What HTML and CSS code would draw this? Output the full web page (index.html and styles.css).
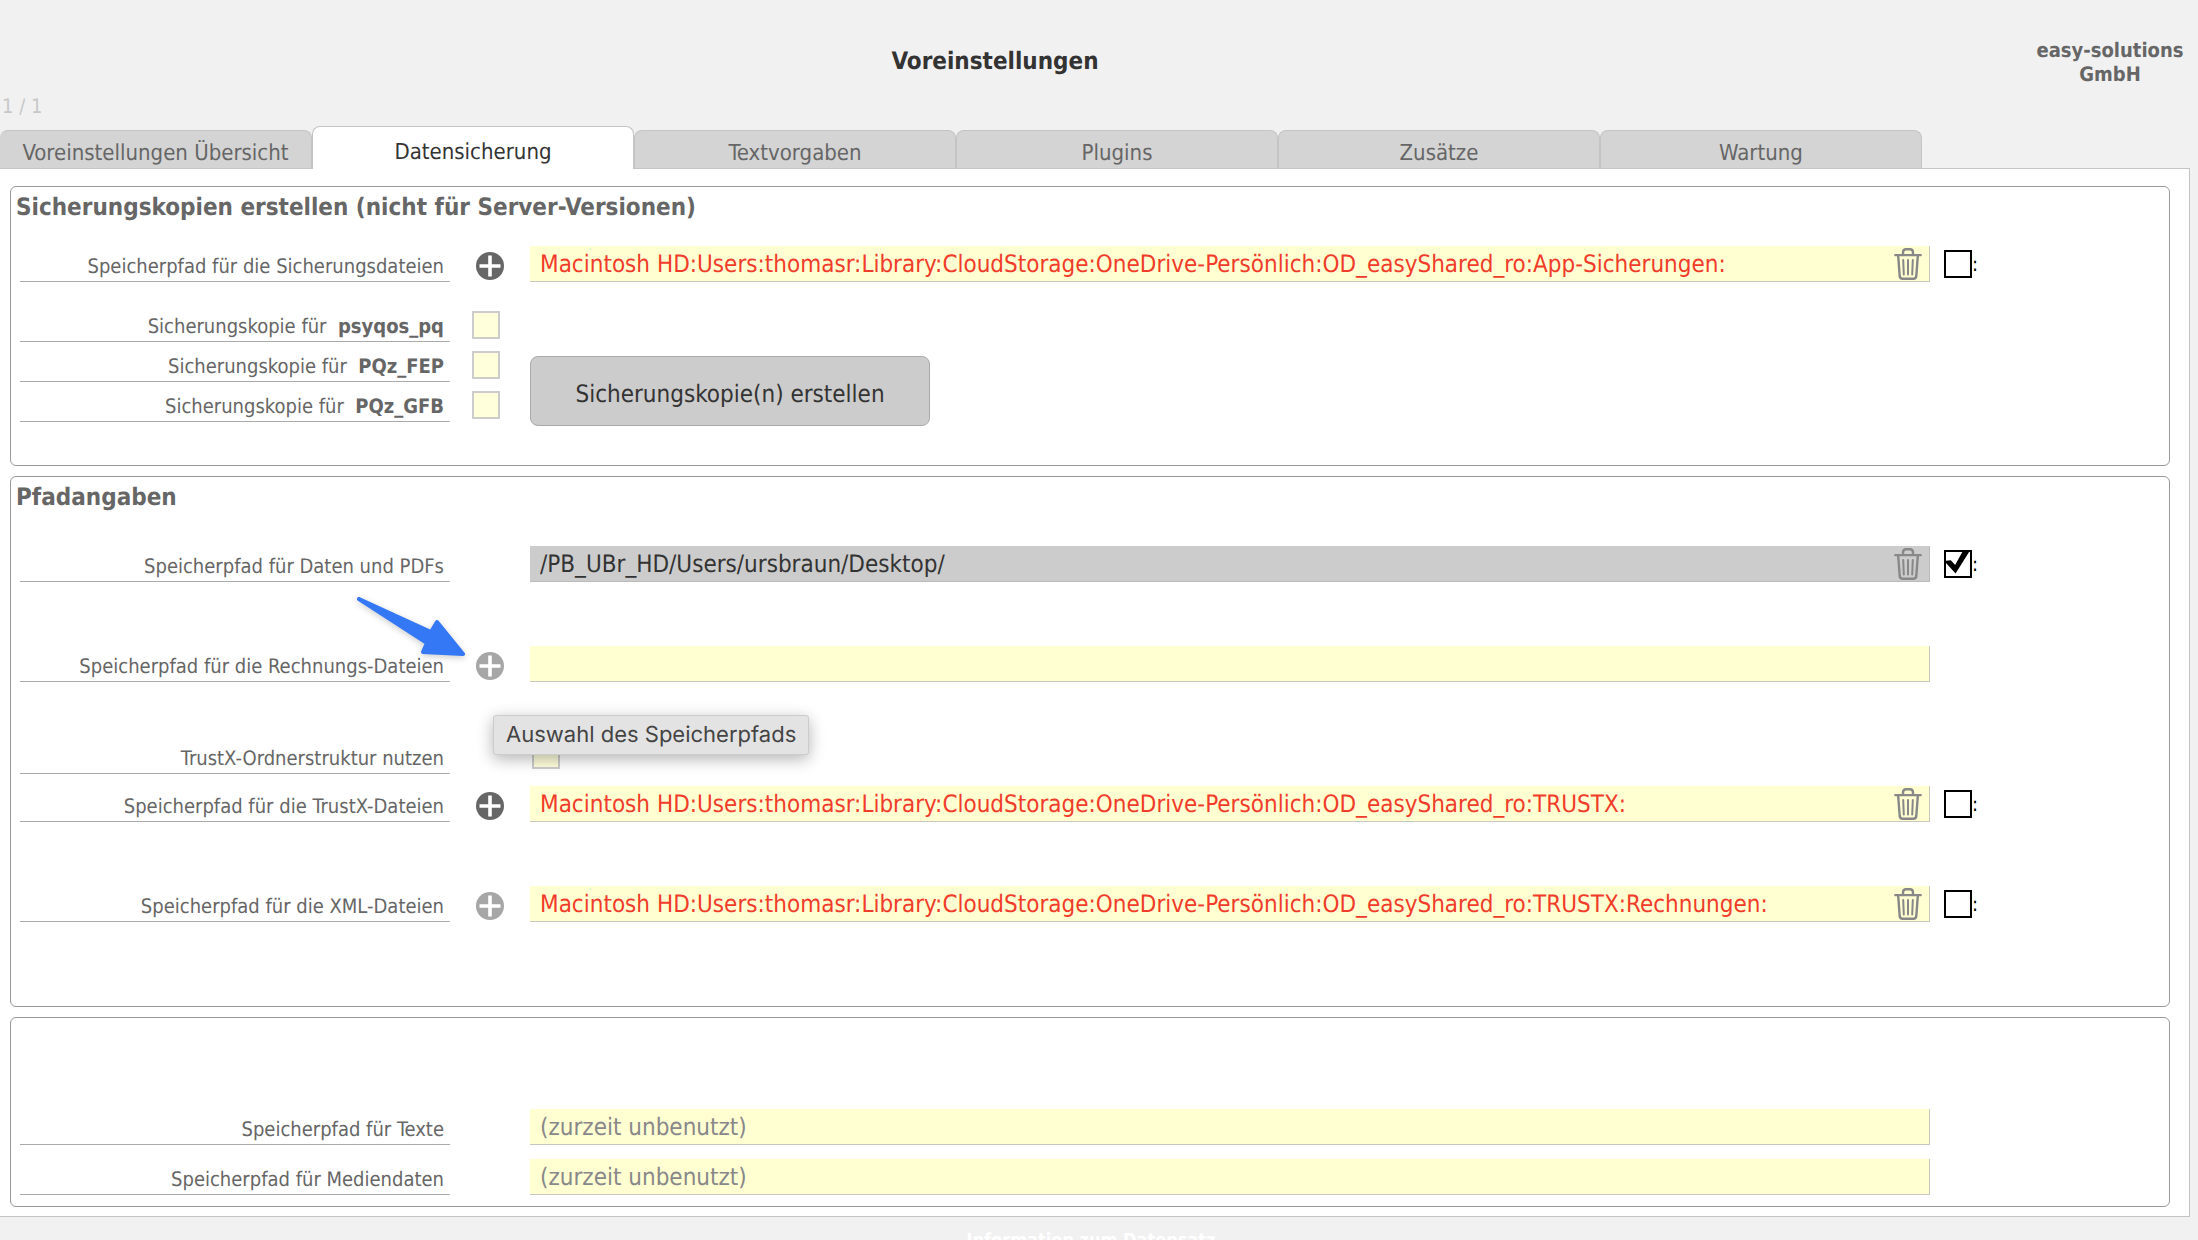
FILE: index.html
```html
<!DOCTYPE html>
<html lang="de">
<head>
<meta charset="utf-8">
<title>Voreinstellungen</title>
<link rel="stylesheet" href="styles.css">
</head>
<body>
<svg class="symbols" aria-hidden="true">
  <symbol id="plus" viewBox="0 0 28 28">
    <circle cx="14" cy="14" r="14" fill="currentColor"/>
    <path d="M14 3.500v21M3.500 14h21" stroke="#fff" stroke-width="3.600" fill="none"/>
  </symbol>
  <symbol id="trash" viewBox="0 0 28 32">
    <g fill="none" stroke="currentColor" stroke-linecap="round" stroke-linejoin="round">
      <path d="M1.200 7.200h25.600" stroke-width="2.200"/>
      <path d="M9 6.500V4.500Q9 1.200 12 1.200h4Q19 1.200 19 4.500V6.500" stroke-width="2.400"/>
      <path d="M4.200 8l1.500 20Q6 30.700 8.500 30.700h11Q22 30.700 22.300 28L23.800 8" stroke-width="2.400"/>
      <path d="M9.200 12l.6 14.500M14 12v14.500M18.800 12l-.6 14.500" stroke-width="2"/>
    </g>
  </symbol>
</svg>

<header class="header">
  <h1 class="title">Voreinstellungen</h1>
  <p class="company">easy-solutions<br>GmbH</p>
  <p class="counter">1 / 1</p>
</header>

<nav class="tabs" role="tablist">
  <button class="tab" role="tab">Voreinstellungen Übersicht</button>
  <button class="tab tab-active" role="tab" aria-selected="true">Datensicherung</button>
  <button class="tab" role="tab">Textvorgaben</button>
  <button class="tab" role="tab">Plugins</button>
  <button class="tab" role="tab">Zusätze</button>
  <button class="tab" role="tab">Wartung</button>
</nav>

<main class="panel">
  <section class="card card-backup">
    <h2 class="heading">Sicherungskopien erstellen (nicht für Server-Versionen)</h2>
    <div class="row">
      <label class="label" for="backup-path">Speicherpfad für die Sicherungsdateien</label>
      <button class="add" aria-label="Pfad wählen"><svg><use href="#plus"/></svg></button>
      <div class="field">
        <input class="input" id="backup-path" type="text" value="Macintosh HD:Users:thomasr:Library:CloudStorage:OneDrive-Persönlich:OD_easyShared_ro:App-Sicherungen:">
        <button class="trash" aria-label="Löschen"><svg><use href="#trash"/></svg></button>
      </div>
      <label class="flag"><input class="box" type="checkbox"><span class="flag-text">:</span></label>
    </div>
    <div class="copies">
      <div class="copy-list">
        <div class="copy"><label class="label" for="copy-1">Sicherungskopie für &nbsp;<b>psyqos_pq</b></label><input class="box box-soft" id="copy-1" type="checkbox"></div>
        <div class="copy"><label class="label" for="copy-2">Sicherungskopie für &nbsp;<b>PQz_FEP</b></label><input class="box box-soft" id="copy-2" type="checkbox"></div>
        <div class="copy"><label class="label" for="copy-3">Sicherungskopie für &nbsp;<b>PQz_GFB</b></label><input class="box box-soft" id="copy-3" type="checkbox"></div>
      </div>
      <button class="create">Sicherungskopie(n) erstellen</button>
    </div>
  </section>

  <section class="card card-paths">
    <h2 class="heading">Pfadangaben</h2>
    <div class="row">
      <label class="label" for="data-path">Speicherpfad für Daten und PDFs</label>
      <div class="field field-grey">
        <input class="input" id="data-path" type="text" value="/PB_UBr_HD/Users/ursbraun/Desktop/">
        <button class="trash" aria-label="Löschen"><svg><use href="#trash"/></svg></button>
      </div>
      <label class="flag"><input class="box" type="checkbox" checked><span class="flag-text">:</span></label>
    </div>
    <div class="row row-spaced">
      <label class="label" for="invoice-path">Speicherpfad für die Rechnungs-Dateien</label>
      <button class="add add-light" aria-label="Pfad wählen" aria-describedby="path-tip"><svg><use href="#plus"/></svg></button>
      <div class="field"><input class="input" id="invoice-path" type="text"></div>
      <svg class="arrow" viewBox="0 0 120 70" aria-hidden="true">
        <path d="M9 9L81 42L87 32L113 64L73 62L77 53Z" fill="#3478f6" stroke="#3478f6" stroke-width="4" stroke-linejoin="round"/>
      </svg>
      <div class="tooltip" id="path-tip" role="tooltip">Auswahl des Speicherpfads</div>
    </div>
    <div class="row row-trustx">
      <label class="label" for="trustx-use">TrustX-Ordnerstruktur nutzen</label>
      <input class="box box-soft box-trustx" id="trustx-use" type="checkbox">
    </div>
    <div class="row row-tight">
      <label class="label" for="trustx-path">Speicherpfad für die TrustX-Dateien</label>
      <button class="add" aria-label="Pfad wählen"><svg><use href="#plus"/></svg></button>
      <div class="field">
        <input class="input" id="trustx-path" type="text" value="Macintosh HD:Users:thomasr:Library:CloudStorage:OneDrive-Persönlich:OD_easyShared_ro:TRUSTX:">
        <button class="trash" aria-label="Löschen"><svg><use href="#trash"/></svg></button>
      </div>
      <label class="flag"><input class="box" type="checkbox"><span class="flag-text">:</span></label>
    </div>
    <div class="row row-spaced">
      <label class="label" for="xml-path">Speicherpfad für die XML-Dateien</label>
      <button class="add add-light" aria-label="Pfad wählen"><svg><use href="#plus"/></svg></button>
      <div class="field">
        <input class="input" id="xml-path" type="text" value="Macintosh HD:Users:thomasr:Library:CloudStorage:OneDrive-Persönlich:OD_easyShared_ro:TRUSTX:Rechnungen:">
        <button class="trash" aria-label="Löschen"><svg><use href="#trash"/></svg></button>
      </div>
      <label class="flag"><input class="box" type="checkbox"><span class="flag-text">:</span></label>
    </div>
  </section>

  <section class="card card-unused">
    <div class="row">
      <label class="label" for="text-path">Speicherpfad für Texte</label>
      <div class="field"><input class="input" id="text-path" type="text" placeholder="(zurzeit unbenutzt)"></div>
    </div>
    <div class="row row-next">
      <label class="label" for="media-path">Speicherpfad für Mediendaten</label>
      <div class="field"><input class="input" id="media-path" type="text" placeholder="(zurzeit unbenutzt)"></div>
    </div>
  </section>
</main>

<footer class="footer">Information zum Datensatz</footer>
</body>
</html>
```

FILE: styles.css
```css
* { box-sizing: border-box; }

body {
  margin: 0;
  background: #f1f1f1;
  color: #666;
  font-family: "DejaVu Sans Condensed", "Noto Sans", sans-serif;
  font-size: 20px;
  line-height: 24px;
  text-rendering: geometricPrecision;
}

button, input { font: inherit; color: inherit; margin: 0; padding: 0; border: 0; text-rendering: inherit; }
button { background: none; cursor: pointer; }
h1, h2, p { margin: 0; }
.symbols { position: absolute; width: 0; height: 0; }

/* Header */
.header {
  display: grid;
  grid-template-columns: 1fr 176px;
  align-items: center;
  padding-top: 38px;
}
.title {
  padding: 0 32px 2px 0;
  text-align: center;
  font-size: 24px;
  color: #333;
}
.company { text-align: center; font-weight: bold; }
.counter { padding: 8px 2px; color: #c8c8c8; }

/* Tabs */
.tabs {
  display: grid;
  grid-template-columns: 312fr repeat(5, 322fr) 276fr;
  align-items: end;
}
.tab {
  height: 38px;
  padding-top: 8px;
  border: 1px solid #c4c4c4;
  border-width: 1px 1px 0 0;
  border-radius: 8px 8px 0 0;
  background: #d4d4d4;
  font-size: 22px;
}
.tab + .tab { border-left-width: 1px; }
.tab-active {
  position: relative;
  height: 43px;
  margin-bottom: -1px;
  padding-top: 10px;
  background: #fff;
  color: #333;
}

/* Panel and cards */
.panel {
  display: flex;
  flex-direction: column;
  gap: 10px;
  margin-right: 8px;
  padding: 17px 19px 9px 10px;
  border: 1px solid #c4c4c4;
  border-left: 0;
  background: #fff;
}
.card {
  padding: 0 239px 0 9px;
  border: 1px solid #999;
  border-radius: 6px;
}
.card-backup { padding-bottom: 39px; }
.card-paths { padding-bottom: 84px; }
.card-unused { padding-top: 91px; padding-bottom: 11px; }
.heading {
  height: 59px;
  margin-left: -4px;
  padding-top: 4px;
  font-size: 24px;
  line-height: 32px;
}
.card-paths .heading { height: 69px; }

/* Form rows */
.row {
  position: relative;
  display: grid;
  grid-template-columns: 430px 80px minmax(0, 1fr);
  height: 36px;
}
.row-spaced { margin-top: 64px; }
.row-trustx { margin-top: 56px; }
.row-tight { margin-top: 12px; }
.row-next { margin-top: 14px; }
.label {
  height: 36px;
  padding: 8px 6px 0 0;
  border-bottom: 1px solid #aaa;
  text-align: right;
  white-space: nowrap;
}
.add {
  width: 28px;
  height: 28px;
  margin-top: 6px;
  justify-self: center;
}
.add svg, .trash svg { display: block; width: 100%; height: 100%; }
.add-light { color: #a6a6a6; }
.field {
  grid-column: 3;
  display: flex;
  padding-right: 7px;
  border: 1px solid #c8c8c0;
  border-width: 0 1px 1px 0;
  background: #ffffd2;
  color: #f03c28;
  font-size: 24px;
}
.field-grey { background: #ccc; color: #333; border-color: #bbb; }
.input {
  flex: 1;
  min-width: 0;
  height: 35px;
  padding-left: 10px;
  background: none;
  outline: 0;
}
.input::placeholder { color: #888; opacity: 1; }
.trash {
  width: 28px;
  height: 32px;
  margin-top: 2px;
  color: #888;
}

/* Tick boxes */
.box {
  appearance: none;
  flex: none;
  width: 28px;
  height: 28px;
  border: 2px solid #000;
  background: #fff;
}
.box:checked::before {
  content: "";
  display: block;
  width: 24px;
  height: 24px;
  background: #000;
  clip-path: polygon(0 36%, 20% 34%, 38% 54%, 68% 0, 96% 0, 40% 90%, 0 46%);
}
.box-soft { border-color: #ccc; background: #ffffdc; }
.box-trustx { grid-column: 3; margin: 3px 2px; }
.flag {
  position: absolute;
  left: calc(100% + 14px);
  display: flex;
  padding-top: 4px;
  color: #000;
}
.flag-text { line-height: 28px; }

/* Backup copies */
.copies { display: flex; align-items: flex-start; margin-top: 24px; }
.copy-list { display: grid; gap: 4px; width: 510px; }
.copy { display: grid; grid-template-columns: 430px 28px; gap: 22px; align-items: end; }
.copy .box { margin-bottom: 3px; }
.create {
  width: 400px;
  height: 70px;
  margin-top: 50px;
  padding-top: 6px;
  border: 1px solid #aaa;
  border-radius: 8px;
  background: #ccc;
  color: #333;
  font-size: 24px;
}

/* Overlays */
.arrow {
  position: absolute;
  left: 330px;
  top: -56px;
  width: 120px;
  height: 70px;
  filter: drop-shadow(0 2px 3px rgb(0 0 0 / 20%));
}
.tooltip {
  position: absolute;
  z-index: 1;
  left: 473px;
  top: 69px;
  padding: 7px 12px;
  border: 1px solid #ccc;
  border-radius: 3px;
  background: #e3e3e3;
  box-shadow: 0 4px 16px rgb(0 0 0 / 30%);
  color: #444;
  font-family: Inter, sans-serif;
  font-size: 22px;
  white-space: nowrap;
}

.footer {
  height: 24px;
  padding: 12px 16px 0 0;
  overflow: hidden;
  color: #fff;
  font-size: 18px;
  font-weight: bold;
  text-align: center;
}
```
